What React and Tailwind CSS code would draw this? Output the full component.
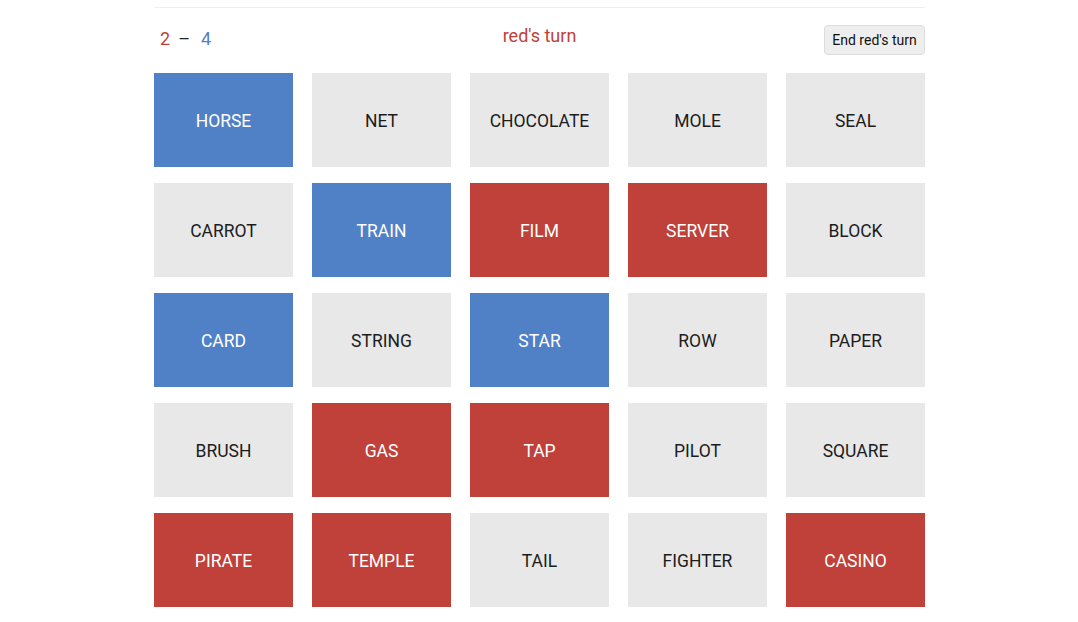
export default function App() {
  const cards = [
    ["HORSE", "b"], ["NET", "n"], ["CHOCOLATE", "n"], ["MOLE", "n"], ["SEAL", "n"],
    ["CARROT", "n"], ["TRAIN", "b"], ["FILM", "r"], ["SERVER", "r"], ["BLOCK", "n"],
    ["CARD", "b"], ["STRING", "n"], ["STAR", "b"], ["ROW", "n"], ["PAPER", "n"],
    ["BRUSH", "n"], ["GAS", "r"], ["TAP", "r"], ["PILOT", "n"], ["SQUARE", "n"],
    ["PIRATE", "r"], ["TEMPLE", "r"], ["TAIL", "n"], ["FIGHTER", "n"], ["CASINO", "r"],
  ];
  const cls = {
    b: "bg-[#5081c6] text-white",
    r: "bg-[#c0403a] text-white",
    n: "bg-[#e8e8e8] text-[#1c1c1c]",
  };
  return (
    <div className="w-[1078px] h-[622px] bg-white font-['Roboto',sans-serif]">
      <div className="w-[771px] ml-[154px] pt-[7px]">
        <div className="h-px bg-[#eeeeee]" />
        <div className="flex items-center justify-between h-[65px] pb-[1px]">
          <div className="flex items-center text-[18px] pl-[6px] w-[200px] -mt-[4px]">
            <span className="text-[#c0403a]">2</span>
            <span className="text-[#222] ml-[8px] mr-[11px]">–</span>
            <span className="text-[#5081c6]">4</span>
          </div>
          <div className="text-[18px] text-[#c0403a] -mt-[9px]">red's turn</div>
          <div className="w-[200px] flex justify-end">
            <button className="h-[30px] px-[6px] w-[101px] rounded-[4px] bg-[#eeeeee] border border-[#dcdcdc] text-[14px] text-[#111] font-['Roboto',sans-serif]">
              End red's turn
            </button>
          </div>
        </div>
        <div className="grid grid-cols-[repeat(5,139px)] gap-x-[19px] gap-y-[16px]">
          {cards.map(([w, c]) => (
            <div key={w} className={`h-[94px] pt-[2px] flex items-center justify-center text-[17.5px] ${cls[c]}`}>
              {w}
            </div>
          ))}
        </div>
      </div>
    </div>
  );
}
